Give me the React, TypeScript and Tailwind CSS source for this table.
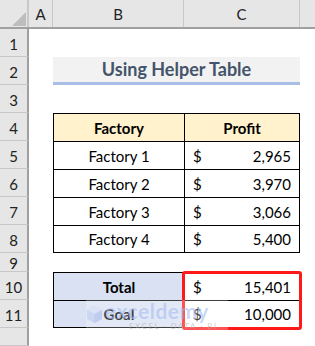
import React from "react";

const font = { fontFamily: "Lato, 'Noto Sans', sans-serif" };

type Row = {
  n: string;
  h: string;
  b?: React.ReactNode;
  c?: React.ReactNode;
  bClass?: string;
  cClass?: string;
};

function Money({ v }: { v: string }) {
  return (
    <div className="flex h-full items-center justify-between px-[8px] pt-[1px] text-[15px] text-black">
      <span>$</span>
      <span>{v}</span>
    </div>
  );
}

function Center({ children, bold }: { children: React.ReactNode; bold?: boolean }) {
  return (
    <div className={"flex h-full items-center justify-center pt-[1px] text-[15px] text-black " + (bold ? "font-bold" : "")}>
      {children}
    </div>
  );
}

const rows: Row[] = [
  { n: "1", h: "h-[28px]" },
  {
    n: "2",
    h: "h-[28px]",
    b: (
      <div className="flex h-full w-[247px] items-center justify-center border-b-[3px] border-[#A9BEE4] bg-[#F2F2F2] text-[18px] font-bold text-[#44546A]">
        Using Helper Table
      </div>
    ),
  },
  { n: "3", h: "h-[28px]" },
  {
    n: "4",
    h: "h-[28px]",
    b: <Center bold>Factory</Center>,
    c: <Center bold>Profit</Center>,
    bClass: "border-l border-t border-black bg-[#FFF2CC]",
    cClass: "border-l border-r border-t border-black bg-[#FFF2CC]",
  },
  {
    n: "5",
    h: "h-[28px]",
    b: <Center>Factory 1</Center>,
    c: <Money v="2,965" />,
    bClass: "border-l border-t border-black",
    cClass: "border-l border-r border-t border-black",
  },
  {
    n: "6",
    h: "h-[28px]",
    b: <Center>Factory 2</Center>,
    c: <Money v="3,970" />,
    bClass: "border-l border-t border-black",
    cClass: "border-l border-r border-t border-black",
  },
  {
    n: "7",
    h: "h-[28px]",
    b: <Center>Factory 3</Center>,
    c: <Money v="3,066" />,
    bClass: "border-l border-t border-black",
    cClass: "border-l border-r border-t border-black",
  },
  {
    n: "8",
    h: "h-[28px]",
    b: <Center>Factory 4</Center>,
    c: <Money v="5,400" />,
    bClass: "border-l border-t border-b border-black",
    cClass: "border border-black",
  },
  { n: "9", h: "h-[19px]" },
  {
    n: "10",
    h: "h-[28px]",
    b: <Center bold>Total</Center>,
    c: <Money v="15,401" />,
    bClass: "border-l border-t border-black bg-[#D9E1F2]",
    cClass: "border-l border-r border-t border-black",
  },
  {
    n: "11",
    h: "h-[28px]",
    b: <Center bold>Goal</Center>,
    c: <Money v="10,000" />,
    bClass: "border-l border-t border-b border-black bg-[#D9E1F2]",
    cClass: "border border-black",
  },
  { n: "", h: "h-[18px]" },
];

// faint site watermark sitting over the Goal row
function Watermark() {
  return (
    <div className="pointer-events-none absolute left-[86px] top-[300px] flex h-[30px] w-[142px] items-center gap-[2px] bg-white/25">
      <svg width="17" height="20" viewBox="0 0 17 20" className="opacity-50">
        <polygon points="8.5,1 16,5 16,14 8.5,18 1,14 1,5" fill="#B5C6F2" />
        <polygon points="8.5,1 16,5 8.5,9 1,5" fill="#D3DDF8" />
        <polygon points="8.5,9 16,5 16,14 8.5,18" fill="#9DB1EC" />
      </svg>
      <div className="flex flex-col items-start leading-none">
        <span className="text-[21px] font-bold tracking-[0.5px] text-[#A9BCF0]/60">exceldemy</span>
        <span className="mt-[1px] pl-[24px] text-[8px] tracking-[1.5px] text-[#B0B0B0]/60">EXCEL · DATA · BI</span>
      </div>
    </div>
  );
}

export default function App() {
  return (
    <div className="relative h-[346px] w-[315px] overflow-hidden bg-white" style={font}>
      {/* column headers */}
      <div className="flex h-[29px] border-b-2 border-[#A0A0A0] bg-[#E6E6E6] text-[15px] text-[#222]">
        <div className="relative w-[29px] border-r-2 border-[#C8C8C8]">
          <svg width="14" height="14" className="absolute left-[12px] top-[12px]">
            <polygon points="14,0 14,14 0,14" fill="#BDBDBD" />
          </svg>
        </div>
        <div className="flex w-[24px] items-center justify-center border-r border-[#C8C8C8] pt-[2px]">A</div>
        <div className="flex w-[131px] items-center justify-center border-r border-[#C8C8C8] pt-[2px]">B</div>
        <div className="flex w-[116px] items-center justify-center border-r border-[#C8C8C8] pt-[2px]">C</div>
        <div className="flex-1" />
      </div>

      {rows.map((r, i) => (
        <div key={i} className={"flex " + r.h}>
          <div className="flex w-[29px] items-center justify-center border-b border-r-2 border-b-[#C8C8C8] border-r-[#A0A0A0] bg-[#E6E6E6] pt-[3px] text-[15px] text-[#222]">
            {r.n}
          </div>
          <div className="w-[24px]" />
          <div className={"w-[131px] " + (r.bClass || "")}>{r.b}</div>
          <div className={"w-[116px] " + (r.cClass || "")}>{r.c}</div>
          <div className="flex-1" />
        </div>
      ))}

      {/* highlighted result box */}
      <div className="pointer-events-none absolute left-[182px] top-[271px] h-[59px] w-[120px] rounded-[3px] border-[3px] border-[#FF1A1A]" />

      <Watermark />
    </div>
  );
}
